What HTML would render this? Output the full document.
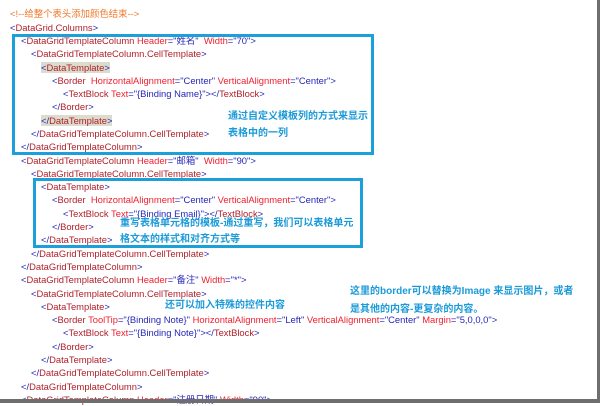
<!DOCTYPE html>
<html><head><meta charset="utf-8"><style>
body{margin:0;width:600px;height:403px;background:#fff;position:relative;overflow:hidden;font-family:"Liberation Sans","Noto Sans CJK SC",sans-serif;}
.l{position:absolute;font-size:9.4px;line-height:12px;white-space:nowrap;letter-spacing:0px;}
.b{color:#2626b8}.e{color:#b0202a}.a{color:#f02030}.v{color:#2626b8}.c{color:#f07828}
.hl{background:#dcdccc}
.box{position:absolute;border:3px solid #1ca0dc;box-sizing:border-box}
.n{position:absolute;color:#1b9ad8;font-size:10px;font-weight:bold;white-space:nowrap;line-height:12px;font-family:"Liberation Sans","Noto Sans CJK SC",sans-serif}
</style></head><body>
<div class="l c" style="left:10px;top:8px">&lt;!--给整个表头添加颜色结束--&gt;</div>
<div class="l" style="left:10px;top:22px"><span class="b">&lt;</span><span class="e">DataGrid.Columns</span><span class="b">&gt;</span></div>
<div class="l" style="left:21px;top:35px"><span class="b">&lt;</span><span class="e">DataGridTemplateColumn</span> <span class="a">Header</span><span class="b">="姓名"</span>&nbsp; <span class="a">Width</span><span class="b">="70"&gt;</span></div>
<div class="l" style="left:31px;top:48px"><span class="b">&lt;</span><span class="e">DataGridTemplateColumn.CellTemplate</span><span class="b">&gt;</span></div>
<div class="l" style="left:41px;top:62px"><span class="hl"><span class="b">&lt;</span><span class="e">DataTemplate</span><span class="b">&gt;</span></span></div>
<div class="l" style="left:52px;top:75px"><span class="b">&lt;</span><span class="e">Border</span>&nbsp; <span class="a">HorizontalAlignment</span><span class="b">="Center"</span> <span class="a">VerticalAlignment</span><span class="b">="Center"&gt;</span></div>
<div class="l" style="left:63px;top:88px"><span class="b">&lt;</span><span class="e">TextBlock</span> <span class="a">Text</span><span class="b">="{Binding Name}"&gt;&lt;/</span><span class="e">TextBlock</span><span class="b">&gt;</span></div>
<div class="l" style="left:52px;top:101px"><span class="b">&lt;/</span><span class="e">Border</span><span class="b">&gt;</span></div>
<div class="l" style="left:41px;top:115px"><span class="hl"><span class="b">&lt;/</span><span class="e">DataTemplate</span><span class="b">&gt;</span></span></div>
<div class="l" style="left:31px;top:128px"><span class="b">&lt;/</span><span class="e">DataGridTemplateColumn.CellTemplate</span><span class="b">&gt;</span></div>
<div class="l" style="left:21px;top:141px"><span class="b">&lt;/</span><span class="e">DataGridTemplateColumn</span><span class="b">&gt;</span></div>
<div class="l" style="left:21px;top:155px"><span class="b">&lt;</span><span class="e">DataGridTemplateColumn</span> <span class="a">Header</span><span class="b">="邮箱"</span>&nbsp; <span class="a">Width</span><span class="b">="90"&gt;</span></div>
<div class="l" style="left:31px;top:168px"><span class="b">&lt;</span><span class="e">DataGridTemplateColumn.CellTemplate</span><span class="b">&gt;</span></div>
<div class="l" style="left:41px;top:181px"><span class="b">&lt;</span><span class="e">DataTemplate</span><span class="b">&gt;</span></div>
<div class="l" style="left:52px;top:194px"><span class="b">&lt;</span><span class="e">Border</span>&nbsp; <span class="a">HorizontalAlignment</span><span class="b">="Center"</span> <span class="a">VerticalAlignment</span><span class="b">="Center"&gt;</span></div>
<div class="l" style="left:63px;top:208px"><span class="b">&lt;</span><span class="e">TextBlock</span> <span class="a">Text</span><span class="b">="{Binding Email}"&gt;&lt;/</span><span class="e">TextBlock</span><span class="b">&gt;</span></div>
<div class="l" style="left:52px;top:221px"><span class="b">&lt;/</span><span class="e">Border</span><span class="b">&gt;</span></div>
<div class="l" style="left:41px;top:234px"><span class="b">&lt;/</span><span class="e">DataTemplate</span><span class="b">&gt;</span></div>
<div class="l" style="left:31px;top:248px"><span class="b">&lt;/</span><span class="e">DataGridTemplateColumn.CellTemplate</span><span class="b">&gt;</span></div>
<div class="l" style="left:21px;top:261px"><span class="b">&lt;/</span><span class="e">DataGridTemplateColumn</span><span class="b">&gt;</span></div>
<div class="l" style="left:21px;top:274px"><span class="b">&lt;</span><span class="e">DataGridTemplateColumn</span> <span class="a">Header</span><span class="b">="备注"</span> <span class="a">Width</span><span class="b">="*"&gt;</span></div>
<div class="l" style="left:31px;top:288px"><span class="b">&lt;</span><span class="e">DataGridTemplateColumn.CellTemplate</span><span class="b">&gt;</span></div>
<div class="l" style="left:41px;top:301px"><span class="b">&lt;</span><span class="e">DataTemplate</span><span class="b">&gt;</span></div>
<div class="l" style="left:52px;top:314px"><span class="b">&lt;</span><span class="e">Border</span> <span class="a">ToolTip</span><span class="b">="{Binding Note}"</span> <span class="a">HorizontalAlignment</span><span class="b">="Left"</span> <span class="a">VerticalAlignment</span><span class="b">="Center"</span> <span class="a">Margin</span><span class="b">="5,0,0,0"&gt;</span></div>
<div class="l" style="left:63px;top:327px"><span class="b">&lt;</span><span class="e">TextBlock</span> <span class="a">Text</span><span class="b">="{Binding Note}"&gt;&lt;/</span><span class="e">TextBlock</span><span class="b">&gt;</span></div>
<div class="l" style="left:52px;top:341px"><span class="b">&lt;/</span><span class="e">Border</span><span class="b">&gt;</span></div>
<div class="l" style="left:41px;top:354px"><span class="b">&lt;/</span><span class="e">DataTemplate</span><span class="b">&gt;</span></div>
<div class="l" style="left:31px;top:367px"><span class="b">&lt;/</span><span class="e">DataGridTemplateColumn.CellTemplate</span><span class="b">&gt;</span></div>
<div class="l" style="left:21px;top:381px"><span class="b">&lt;/</span><span class="e">DataGridTemplateColumn</span><span class="b">&gt;</span></div>
<div class="l" style="left:21px;top:394px"><span class="b">&lt;</span><span class="e">DataGridTemplateColumn</span> <span class="a">Header</span><span class="b">="注册日期"</span> <span class="a">Width</span><span class="b">="90"&gt;</span></div>

<div class="box" style="left:12px;top:34px;width:362px;height:121px"></div>
<div class="box" style="left:33px;top:178px;width:330px;height:70px"></div>

<div class="n" style="left:228px;top:111px">通过自定义模板列的方式来显示</div>
<div class="n" style="left:228px;top:128px">表格中的一列</div>
<div class="n" style="left:120px;top:218px">重写表格单元格的模板-通过重写，我们可以表格单元</div>
<div class="n" style="left:120px;top:234px">格文本的样式和对齐方式等</div>
<div class="n" style="left:165px;top:300px">还可以加入特殊的控件内容</div>
<div class="n" style="left:350px;top:286px">这里的border可以替换为Image 来显示图片，或者</div>
<div class="n" style="left:350px;top:304px">是其他的内容-更复杂的内容。</div>

<div style="position:absolute;left:597px;top:0;width:3px;height:403px;background:#6e6e6e"></div>
<div style="position:absolute;left:0;top:399px;width:600px;height:4px;background:#6e6e6e"></div>
</body></html>
